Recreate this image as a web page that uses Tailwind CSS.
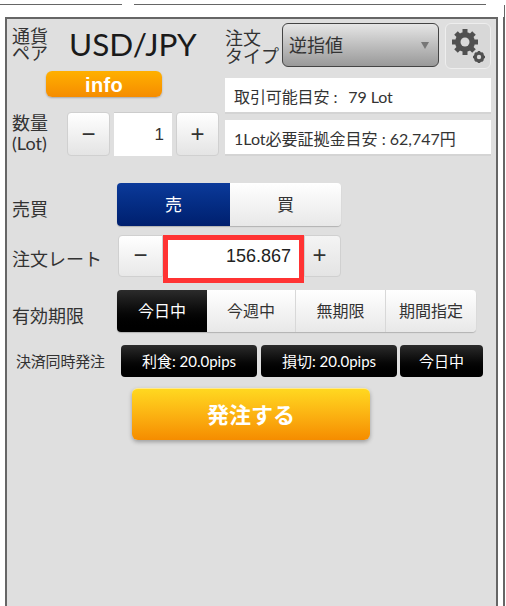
<!DOCTYPE html>
<html lang="ja">
<head>
  <meta charset="UTF-8" />
  <title>注文</title>
  <script src="https://cdn.jsdelivr.net/npm/@tailwindcss/browser@4"></script>
</head>
<body class="w-[506px] h-[606px] overflow-hidden bg-white text-[#333] font-['Lato','Noto_Sans_CJK_JP',sans-serif]">

  <!-- previous panel edges -->
  <div class="flex h-[17px]">
    <div class="w-[122px] h-[5px] border-b border-[#666]"></div>
    <div class="w-[352px] h-[5px] ml-[12px] border-b border-[#666]"></div>
    <div class="w-px h-[17px] ml-[18px] mt-[5px] bg-[#666]"></div>
  </div>

  <div class="flex">
    <main class="w-[493px] h-[589px] ml-[5px] border-2 border-b-0 border-[#666] bg-[#dfdfdf] pt-1">
      <!-- top block -->
      <div class="flex h-[137px]">
        <div class="w-[218px] shrink-0 flex flex-col">
          <div class="flex h-[48px] pl-[5px] pt-[2px]">
            <div class="w-[57px] text-[18px] leading-[17px] pt-[3px]">通貨<br>ペア</div>
            <div class="text-[31.5px] leading-[38px] text-[#1a1a1a]">USD/JPY</div>
          </div>
          <button class="ml-[39px] w-[116px] h-[26px] pt-[3px] rounded-md bg-gradient-to-b from-[#ffb000] to-[#f58c00] text-white font-bold text-[20px] leading-[23px] tracking-[0.3px] font-['Liberation_Sans'] shadow-[0_1px_2px_rgba(0,0,0,0.25)]">info</button>
          <div class="flex items-center mt-[15px] pl-[5px]">
            <div class="w-[55px] text-[18px] leading-[20px] pb-[3px]">数量<br>(Lot)</div>
            <div class="flex gap-1 h-[44px] font-['Liberation_Sans']">
              <div class="w-[43px] flex items-center justify-center rounded bg-gradient-to-b from-white to-[#e4e4e4] border border-[#d0d0d0] text-[24px]">−</div>
              <div class="w-[58px] flex items-center justify-end pr-[8px] bg-white border-t border-[#ccc] text-[17px]">1</div>
              <div class="w-[43px] flex items-center justify-center rounded bg-gradient-to-b from-white to-[#e4e4e4] border border-[#d0d0d0] text-[24px]">+</div>
            </div>
          </div>
        </div>
        <div class="w-[266px] shrink-0 flex flex-col">
          <div class="flex h-[47px]">
            <div class="w-[57px] text-[18px] leading-[18px] pt-[6px]">注文<br>タイプ</div>
            <div class="w-[157px] h-[44px] flex items-center justify-between pl-[6px] pr-[9px] rounded-md border border-[#444] bg-gradient-to-b from-[#e6e6e6] to-[#999] text-[18px]">
              <span>逆指値</span>
              <span class="w-0 h-0 border-x-[4px] border-t-[7px] border-x-transparent border-t-[#777]"></span>
            </div>
            <div class="w-[46px] h-[46px] ml-[6px] flex items-center justify-center rounded-md border border-[#eee] bg-[#d8d8d8]">
              <svg width="36" height="40" viewBox="0 0 36 40">
                <g fill="#505050">
                  <circle cx="15" cy="16" r="10" />
                  <g stroke="#505050" stroke-width="5">
                    <path d="M15 3V29M2 16H28M6 7L24 25M24 7L6 25" />
                  </g>
                </g>
                <circle cx="15" cy="16" r="4.5" fill="#d8d8d8" />
                <g fill="#505050" stroke="#505050" stroke-width="2.5">
                  <circle cx="29" cy="31" r="4" />
                  <path d="M29 25V37M23 31H35M25 27L33 35M33 27L25 35" />
                </g>
                <circle cx="29" cy="31" r="2.2" fill="#d8d8d8" />
              </svg>
            </div>
          </div>
          <div class="h-[36px] mt-[8px] pt-[3px] flex items-center pl-[9px] bg-white border-b-2 border-[#d4d4d4] text-[16px] tracking-[-0.1px]">取引可能目安 :<span class="ml-[11px]">79 Lot</span></div>
          <div class="h-[36px] mt-[6px] pt-[3px] flex items-center pl-[9px] bg-white border-b-2 border-[#d4d4d4] text-[16px]">1Lot必要証拠金目安 : 62,747円</div>
        </div>
      </div>

      <!-- 売買 -->
      <div class="flex items-center mt-[23px] h-[43px]">
        <div class="w-[110px] pl-[5px] text-[18px] pt-[10px]">売買</div>
        <div class="flex h-full w-[224px] rounded shadow-[0_1px_1px_rgba(0,0,0,0.2)] text-[17px]">
          <div class="w-[113px] flex items-center justify-center rounded-l bg-gradient-to-b from-[#0c3a9a] to-[#001f6e] text-white">売</div>
          <div class="w-[111px] flex items-center justify-center rounded-r bg-gradient-to-b from-white to-[#e8e8e8]">買</div>
        </div>
      </div>

      <!-- 注文レート -->
      <div class="flex mt-[9px] h-[48px]">
        <div class="w-[111px] pl-[5px] text-[18px] pt-[11px]">注文レート</div>
        <div class="flex h-full font-['Liberation_Sans']">
          <div class="w-[45px] h-[42px] flex items-center justify-center rounded-l bg-gradient-to-b from-white to-[#e8e8e8] border border-[#d0d0d0] text-[24px] pb-[3px]">−</div>
          <div class="w-[141px] flex items-center justify-end pr-[8px] pb-[5px] bg-white border-[5px] border-[#ff3333] text-[18px] text-[#222]">156.867</div>
          <div class="w-[37px] h-[42px] flex items-center justify-center pr-[6px] pb-[3px] rounded-r bg-gradient-to-b from-[#f4f4f4] to-[#e4e4e4] border border-[#d0d0d0] text-[24px]">+</div>
        </div>
      </div>

      <!-- 有効期限 -->
      <div class="flex mt-[7px] h-[42px]">
        <div class="w-[110px] pl-[5px] text-[18px] pt-[13px]">有効期限</div>
        <div class="flex h-full rounded shadow-[0_1px_1px_rgba(0,0,0,0.2)] text-[16px]">
          <div class="w-[90px] flex items-center justify-center rounded-l bg-gradient-to-b from-[#2c2c2c] to-black text-white">今日中</div>
          <div class="w-[89px] flex items-center justify-center bg-gradient-to-b from-white to-[#e8e8e8] border-r border-[#d8d8d8]">今週中</div>
          <div class="w-[90px] flex items-center justify-center bg-gradient-to-b from-white to-[#e8e8e8] border-r border-[#d8d8d8]">無期限</div>
          <div class="w-[90px] flex items-center justify-center rounded-r bg-gradient-to-b from-white to-[#e8e8e8]">期間指定</div>
        </div>
      </div>

      <!-- 決済同時発注 -->
      <div class="flex items-center mt-[13px] h-[32px]">
        <div class="w-[114px] pl-[9px] text-[15px] tracking-[-0.2px]">決済同時発注</div>
        <div class="flex h-full gap-[4px] text-white text-[15px]">
          <div class="w-[136px] flex items-center justify-center rounded bg-gradient-to-b from-[#2c2c2c] to-black">利食: 20.0pips</div>
          <div class="w-[136px] flex items-center justify-center rounded bg-gradient-to-b from-[#2c2c2c] to-black">損切: 20.0pips</div>
          <div class="w-[83px] -ml-px flex items-center justify-center rounded bg-gradient-to-b from-[#2c2c2c] to-black">今日中</div>
        </div>
      </div>

      <!-- 発注 -->
      <button class="block ml-[125px] mt-[11px] w-[238px] h-[52px] rounded-md border-t border-[#ffe98a] bg-gradient-to-b from-[#ffd820] to-[#f58c00] text-white font-bold text-[22px] shadow-[0_2px_4px_rgba(0,0,0,0.3)]">発注する</button>
    </main>
    <div class="w-[2px] h-[589px] ml-[5px] bg-[#666]"></div>
  </div>
</body>
</html>
